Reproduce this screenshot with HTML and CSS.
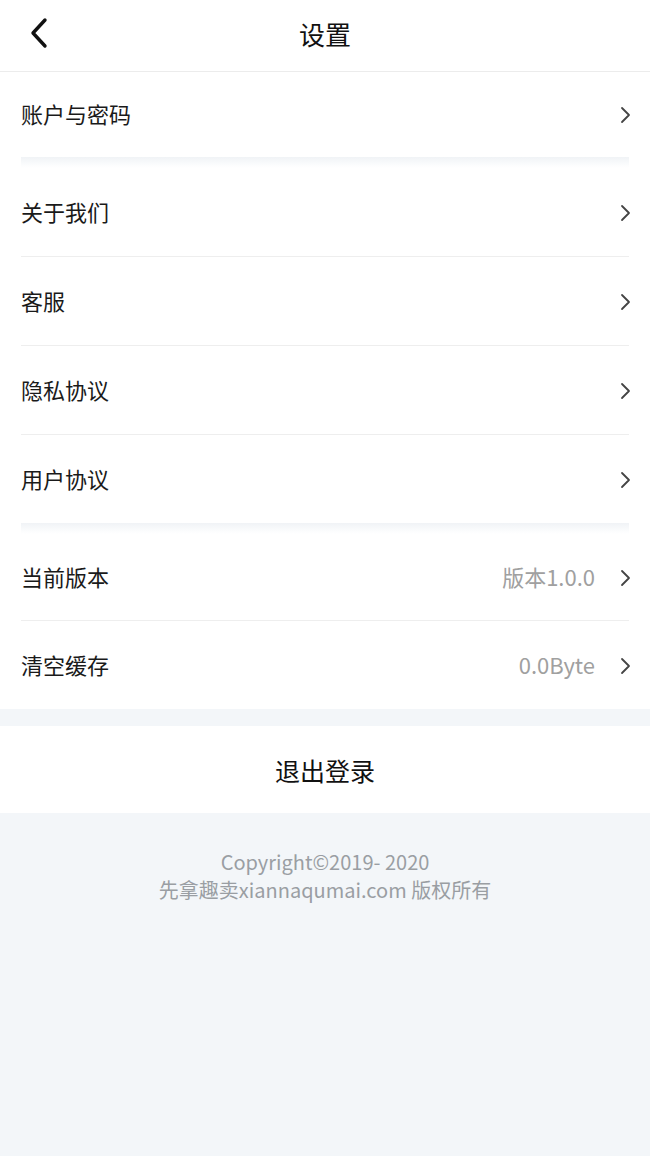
FILE: index.html
```html
<!DOCTYPE html>
<html lang="zh-CN">
<head>
  <meta charset="UTF-8">
  <title>设置</title>
  <link rel="stylesheet" href="styles.css">
</head>
<body>
  <div class="page">
    <header class="topbar">
      <span class="back">
        <svg width="20" height="32" viewBox="0 0 20 32"><path d="M16 3 L4 16 L16 29" fill="none" stroke="#111" stroke-width="3.4" stroke-linecap="round" stroke-linejoin="round"/></svg>
      </span>
      <h1>设置</h1>
    </header>

    <div class="group">
      <div class="row first"><span class="label">账户与密码</span><svg class="arrow" width="11" height="18" viewBox="0 0 11 18"><path d="M2 2 L9 9 L2 16" fill="none" stroke="#444" stroke-width="1.8" stroke-linecap="round" stroke-linejoin="round"/></svg></div>
    </div>
    <div class="band"></div>

    <div class="group">
      <div class="row"><span class="label">关于我们</span><svg class="arrow" width="11" height="18" viewBox="0 0 11 18"><path d="M2 2 L9 9 L2 16" fill="none" stroke="#444" stroke-width="1.8" stroke-linecap="round" stroke-linejoin="round"/></svg></div>
      <div class="row"><span class="label">客服</span><svg class="arrow" width="11" height="18" viewBox="0 0 11 18"><path d="M2 2 L9 9 L2 16" fill="none" stroke="#444" stroke-width="1.8" stroke-linecap="round" stroke-linejoin="round"/></svg></div>
      <div class="row"><span class="label">隐私协议</span><svg class="arrow" width="11" height="18" viewBox="0 0 11 18"><path d="M2 2 L9 9 L2 16" fill="none" stroke="#444" stroke-width="1.8" stroke-linecap="round" stroke-linejoin="round"/></svg></div>
      <div class="row last"><span class="label">用户协议</span><svg class="arrow" width="11" height="18" viewBox="0 0 11 18"><path d="M2 2 L9 9 L2 16" fill="none" stroke="#444" stroke-width="1.8" stroke-linecap="round" stroke-linejoin="round"/></svg></div>
    </div>
    <div class="band"></div>

    <div class="group">
      <div class="row short"><span class="label">当前版本</span><span class="value">版本1.0.0</span><svg class="arrow" width="11" height="18" viewBox="0 0 11 18"><path d="M2 2 L9 9 L2 16" fill="none" stroke="#444" stroke-width="1.8" stroke-linecap="round" stroke-linejoin="round"/></svg></div>
      <div class="row last"><span class="label">清空缓存</span><span class="value">0.0Byte</span><svg class="arrow" width="11" height="18" viewBox="0 0 11 18"><path d="M2 2 L9 9 L2 16" fill="none" stroke="#444" stroke-width="1.8" stroke-linecap="round" stroke-linejoin="round"/></svg></div>
    </div>

    <div class="logout">退出登录</div>

    <footer class="copyright">
      <p>Copyright©2019- 2020</p>
      <p>先拿趣卖xiannaqumai.com 版权所有</p>
    </footer>
  </div>
</body>
</html>
```

FILE: styles.css
```css
html, body {
  margin: 0;
  padding: 0;
  background-color: #f3f6f9;
}
body {
  font-family: "Noto Sans CJK SC", "Noto Sans", sans-serif;
  color: #1a1a1a;
}
.page {
  width: 650px;
  min-height: 1156px;
}
.topbar {
  position: relative;
  height: 72px;
  box-sizing: border-box;
  padding-bottom: 4px;
  background-color: #fff;
  border-bottom: 1px solid #ececec;
  display: flex;
  align-items: center;
  justify-content: center;
}
.topbar h1 {
  margin: 0;
  font-size: 26px;
  font-weight: 400;
  color: #111;
}
.back {
  position: absolute;
  left: 29px;
  top: 17px;
  display: flex;
}
.group {
  background-color: #fff;
  padding: 0 21px;
}
.row {
  height: 89px;
  box-sizing: border-box;
  padding-bottom: 3px;
  display: flex;
  align-items: center;
  border-bottom: 1px solid #eeeeee;
  font-size: 22px;
}
.row.first {
  height: 85px;
  border-bottom: none;
}
.row.short {
  height: 87px;
}
.row.last {
  height: 88px;
  border-bottom: none;
}
.label {
  flex: 1;
}
.value {
  color: #a0a0a0;
  margin-right: 25px;
}
.arrow {
  flex: none;
  margin: 4px -2px 0 0;
}
.band {
  height: 11px;
  margin: 0 21px;
  background: linear-gradient(#f0f3f6, #fbfcfd 70%, #fff);
  box-shadow: 0 0 0 21px #fff;
  clip-path: inset(0 -21px);
}
.logout {
  margin-top: 17px;
  height: 87px;
  background-color: #fff;
  display: flex;
  align-items: center;
  justify-content: center;
  font-size: 25px;
  color: #111;
}
.copyright {
  padding-top: 35px;
  text-align: center;
  color: #9a9ea3;
  font-size: 20px;
  line-height: 28px;
}
.copyright p {
  margin: 0;
}
```
